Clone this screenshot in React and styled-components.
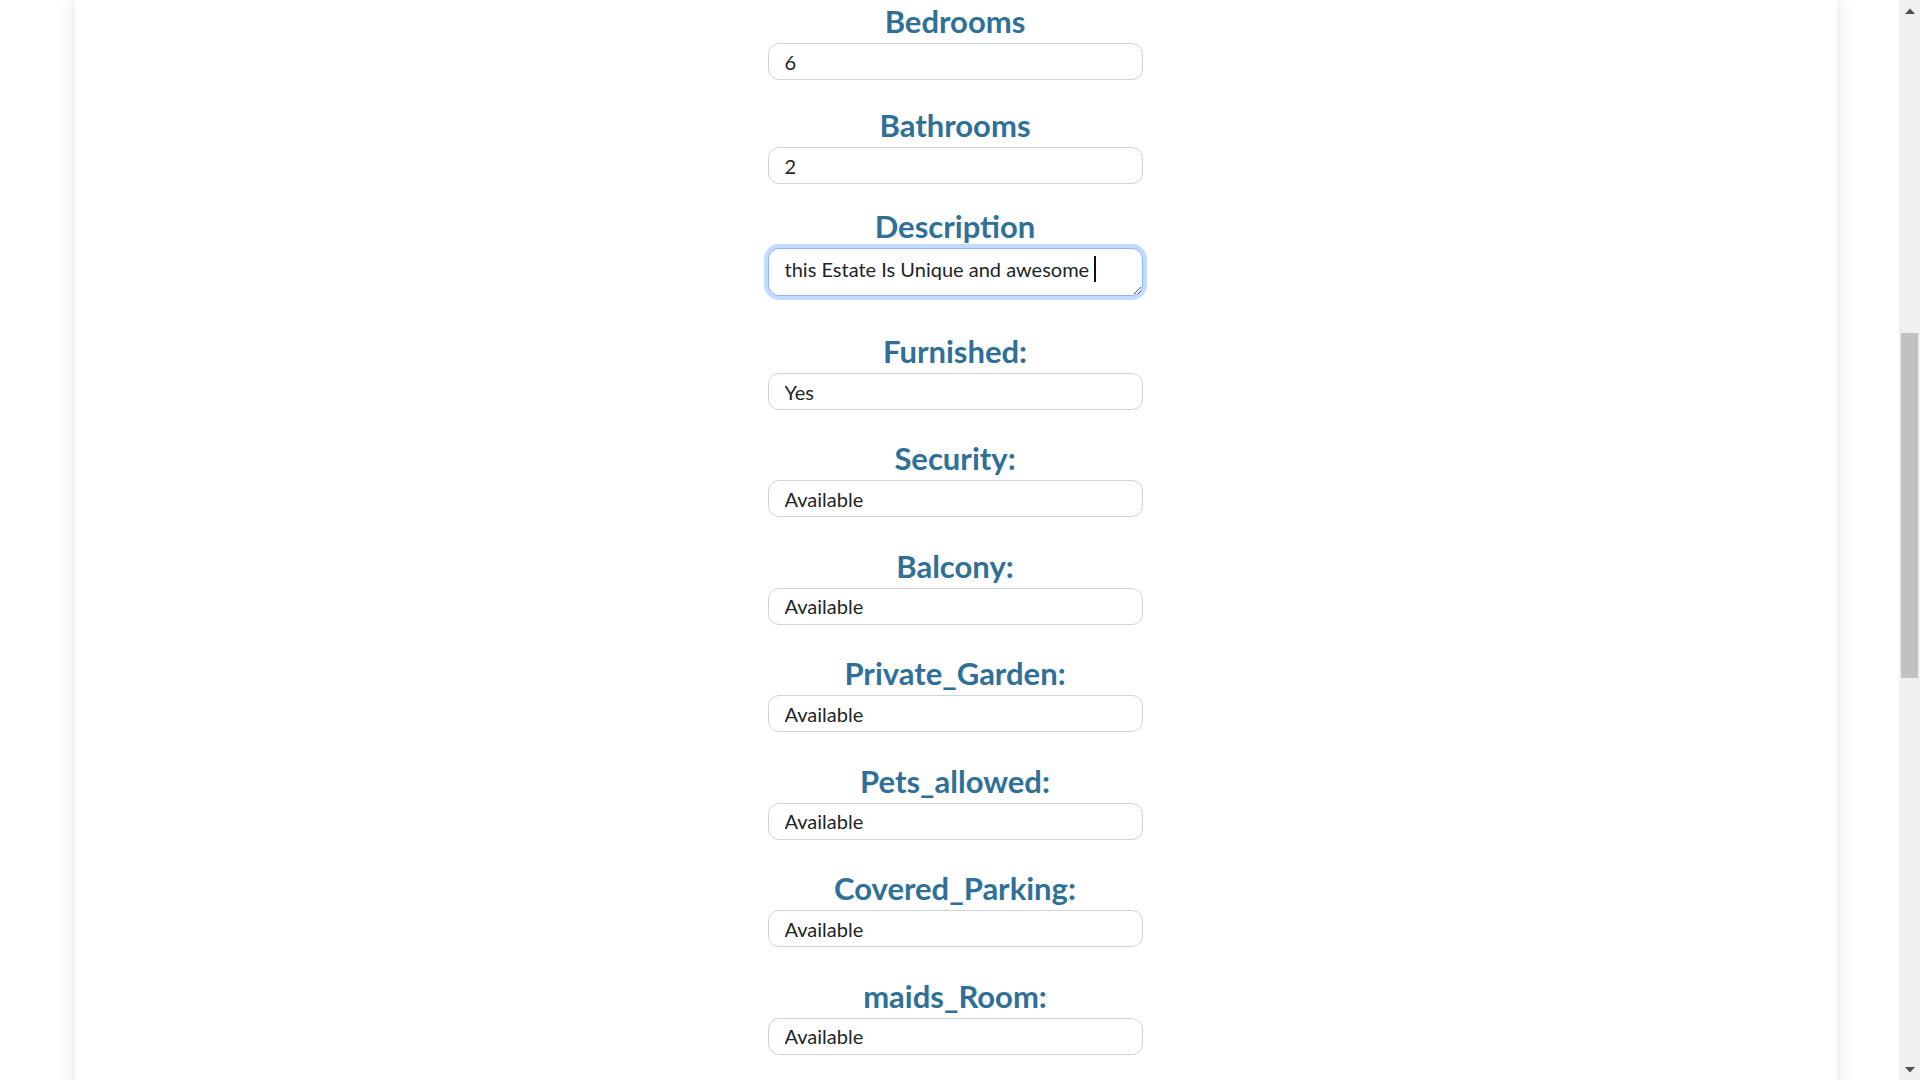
import React from "react";
import styled, { createGlobalStyle } from "styled-components";

const Global = createGlobalStyle`
  html, body { margin: 0; padding: 0; height: 100%; overflow: hidden; background: #fff; }
  #root { height: 100vh; }
  * { box-sizing: border-box; }
`;

const Screen = styled.div`
  display: flex;
  height: 100vh;
  width: 100vw;
`;

const Viewport = styled.div`
  flex: 1;
  overflow: hidden;
  padding: 0 62px 0 75px;
  background: #fff;
`;

const Card = styled.div`
  background: #fff;
  min-height: 100%;
  box-shadow: 0 0 16px rgba(0, 0, 0, 0.13);
  display: flex;
  flex-direction: column;
  align-items: center;
  padding: 3px 2px 60px 0;
`;

const Field = styled.div`
  display: flex;
  flex-direction: column;
  align-items: center;
  width: 375px;
  margin-bottom: ${(p) => p.$after}px;
`;

const Label = styled.h3`
  margin: 0 0 4px;
  height: 36px;
  line-height: 36px;
  font-family: Lato, "Open Sans", sans-serif;
  font-weight: 700;
  font-size: 31px;
  color: #2f7099;
  text-align: center;
  white-space: nowrap;
`;

const TextInput = styled.input`
  width: 375px;
  height: 37px;
  padding: 0 16px;
  border: 1px solid #cfd4dc;
  border-radius: 11px;
  background: #fff;
  font-family: Lato, "Open Sans", sans-serif;
  font-size: 20px;
  color: #212529;
  outline: none;
`;

const TextBox = styled.div`
  width: 375px;
  height: 48px;
  padding: 7px 16px;
  border: 1px solid #86b7fe;
  border-radius: 11px;
  box-shadow: 0 0 0 4px rgba(13, 110, 253, 0.25);
  background: #fff;
  font-family: Lato, "Open Sans", sans-serif;
  font-size: 20px;
  line-height: 26px;
  color: #212529;
  white-space: pre;
  resize: both;
  overflow: hidden;
`;

const Caret = styled.span`
  display: inline-block;
  width: 2px;
  height: 26px;
  background: #111;
  vertical-align: top;
`;

const Scrollbar = styled.div`
  width: 21px;
  background: #f0f0f0;
  display: flex;
  flex-direction: column;
`;

const ArrowButton = styled.div`
  height: 21px;
  display: flex;
  align-items: center;
  justify-content: center;
`;

const Track = styled.div`
  flex: 1;
  padding: 312px 2px 0;
`;

const Thumb = styled.div`
  height: 345px;
  background: #c1c1c1;
`;

const Arrow = ({ down }) => (
  <svg width="10" height="6" viewBox="0 0 10 6">
    <polygon points={down ? "0,0 10,0 5,5.5" : "0,6 10,6 5,0.5"} fill="#505050" />
  </svg>
);

const numberFields = [
  { label: "Bedrooms", value: "6", after: 27 },
  { label: "Bathrooms", value: "2", after: 24 },
];

const selectFields = [
  { label: "Furnished:", value: "Yes", after: 30 },
  { label: "Security:", value: "Available", after: 30.5 },
  { label: "Balcony:", value: "Available", after: 30.5 },
  { label: "Private_Garden:", value: "Available", after: 30.5 },
  { label: "Pets_allowed:", value: "Available", after: 30.5 },
  { label: "Covered_Parking:", value: "Available", after: 30.5 },
  { label: "maids_Room:", value: "Available", after: 30.5 },
];

export default function App() {
  return (
    <>
      <Global />
      <Screen>
        <Viewport>
          <Card>
            {numberFields.map((f) => (
              <Field key={f.label} $after={f.after}>
                <Label>{f.label}</Label>
                <TextInput type="text" defaultValue={f.value} readOnly />
              </Field>
            ))}
            <Field $after={37}>
              <Label>Description</Label>
              <TextBox>
                {"this Estate Is Unique and awesome "}
                <Caret />
              </TextBox>
            </Field>
            {selectFields.map((f) => (
              <Field key={f.label} $after={f.after}>
                <Label>{f.label}</Label>
                <TextInput type="text" defaultValue={f.value} readOnly />
              </Field>
            ))}
          </Card>
        </Viewport>
        <Scrollbar>
          <ArrowButton>
            <Arrow />
          </ArrowButton>
          <Track>
            <Thumb />
          </Track>
          <ArrowButton>
            <Arrow down />
          </ArrowButton>
        </Scrollbar>
      </Screen>
    </>
  );
}
